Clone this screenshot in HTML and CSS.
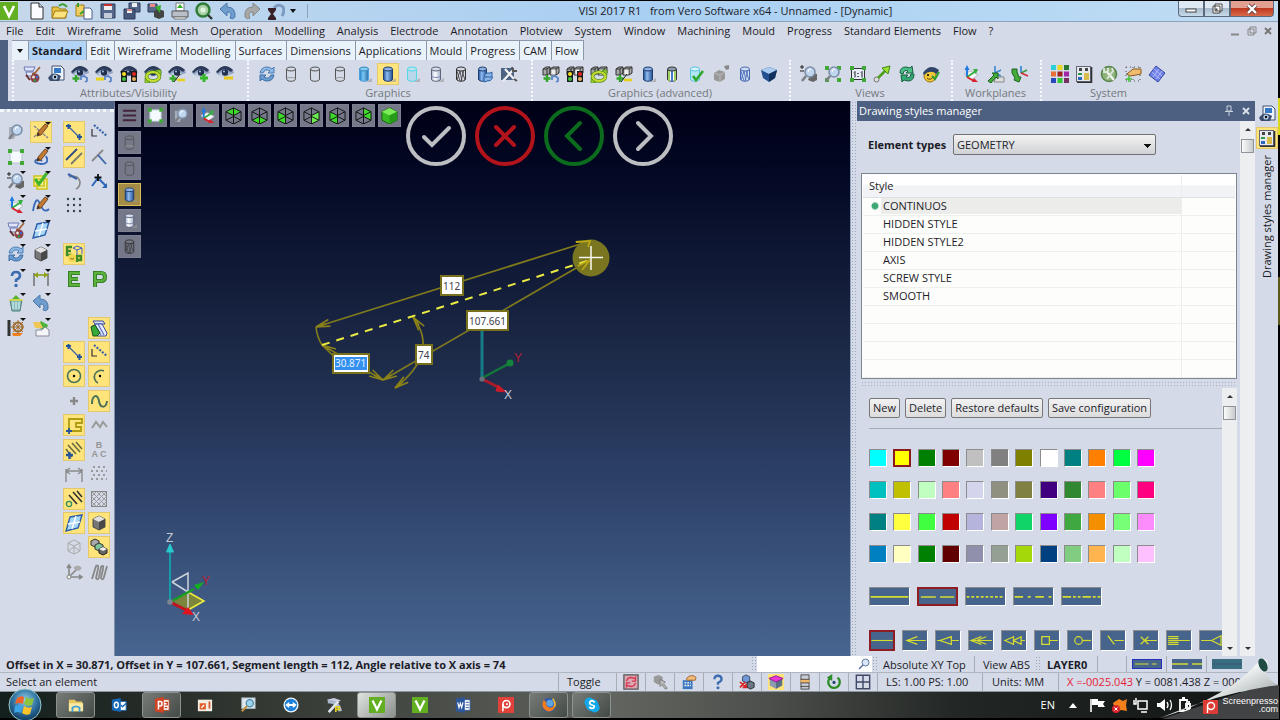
FILE: index.html
```html
<!DOCTYPE html>
<html lang="en">
<head>
<meta charset="utf-8">
<title>VISI 2017 R1 from Vero Software x64 - Unnamed - [Dynamic]</title>
<link rel="stylesheet" href="styles.css">
</head>
<body>
<svg class="defs" aria-hidden="true">
<defs>
<linearGradient id="gBlue"><stop offset="0" stop-color="#1f4f96"/><stop offset=".4" stop-color="#8fbdf0"/><stop offset="1" stop-color="#244f92"/></linearGradient>
<linearGradient id="gSky"><stop offset="0" stop-color="#1b78c4"/><stop offset=".4" stop-color="#7cc8f4"/><stop offset="1" stop-color="#2a6ea8"/></linearGradient>
<linearGradient id="gPale"><stop offset="0" stop-color="#a9b6d2"/><stop offset=".4" stop-color="#fff"/><stop offset="1" stop-color="#a3b0ce"/></linearGradient>
<linearGradient id="gCurl" x1="0" y1="0" x2="1" y2="1"><stop offset="0" stop-color="#6e7478"/><stop offset=".45" stop-color="#f4f6f6"/><stop offset=".7" stop-color="#b9bfc0"/><stop offset="1" stop-color="#777"/></linearGradient>
<radialGradient id="gOrb" cx=".5" cy=".35" r=".65"><stop offset="0" stop-color="#8fd0ea"/><stop offset=".6" stop-color="#2d6f9e"/><stop offset="1" stop-color="#10395c"/></radialGradient>
<g id="eye"><path d="M0 7Q8-3 17 5l1 3-3 1Q11 12 5 11L1 9z" fill="#8fa2c2"/><path d="M0 7Q8-4 17 5L15 7Q8 1 2 8Z" fill="#2b3a58"/><path d="M3 9Q8 4 14 8 10 12 5 11z" fill="#c3d2e8"/><circle cx="9" cy="7.500" r="3.200" fill="#22304e"/><circle cx="8" cy="6.500" r="1" fill="#9fc0ec"/></g>
<g id="plus"><path d="M5 10v7M1.500 13.500h7" stroke="#35a82c" stroke-width="2.400"/></g>
<g id="minus"><path d="M9 15h8" stroke="#e6d21b" stroke-width="2.600"/></g>
<g id="hook"><path d="M10 15v-3l3-1 3 2v3l-2 1" fill="none" stroke="#5a86c8" stroke-width="1.800"/></g>
<g id="lights"><rect x="1" y="6" width="6" height="11" fill="#1c1c1c"/><rect x="11" y="6" width="6" height="11" fill="#1c1c1c"/><circle cx="4" cy="9" r="2" fill="#f3e02c"/><circle cx="4" cy="14" r="2" fill="#3ec43e"/><circle cx="14" cy="9" r="2" fill="#e02424"/><circle cx="14" cy="14" r="2" fill="#e8b060"/></g>
<g id="cycleG"><ellipse cx="9" cy="11.500" rx="6.500" ry="4.500" fill="none" stroke="#4b8c1c" stroke-width="3.600"/><ellipse cx="9" cy="11.500" rx="6.500" ry="4.500" fill="none" stroke="#c8dc30" stroke-width="2.200"/><path d="M12 5h5v5zM6 18H1v-5z" fill="#98c828" stroke="#4b8c1c" stroke-width=".7"/></g>
<g id="boxes"><path d="M1 4l3-2h4v6l-3 2H1zM8 4l3-2h6v6l-3 2H8z" fill="#a9a9a9" stroke="#333"/><path d="M1 4h4v6M5 4l3-2M8 4h6v6M14 4l3-2" fill="none" stroke="#333"/><path d="M9.500 4.500h4v5h-4z" fill="#eee"/></g>
<g id="lens"><circle cx="10" cy="7" r="5" fill="#bfd6ee" stroke="#7d8ea8" stroke-width="1.600"/><path d="M6 11l-4 5" stroke="#7d8288" stroke-width="2.600"/><path d="M8 7q0-3 3-3" fill="none" stroke="#fff"/></g>
<g id="corners" fill="#41a838"><rect x="1" y="1" width="4" height="4"/><rect x="13" y="1" width="4" height="4"/><rect x="1" y="13" width="4" height="4"/><rect x="13" y="13" width="4" height="4"/></g>
<g id="cube"><path d="M3 5l6-3 6 3v8l-6 3-6-3z" fill="#777" stroke="#333" stroke-width=".8"/><path d="M3 5l6-3 6 3-6 3z" fill="#e2e2e2"/><path d="M9 8v8l6-3V5z" fill="#484848"/></g>
<g id="wire" fill="none" stroke="#111"><path d="M1 5l8-4 8 4v9l-8 4-8-4zM1 5l8 4 8-4M9 9v9M9 1v9M1 14l8-4 8 4"/></g>
<g id="pencil"><path d="M5 13l1-4 7-8 3 2-7 9z" fill="#c07a34" stroke="#5b3413" stroke-width=".8"/><path d="M5 13l1-3 2 1z" fill="#222"/></g>
<g id="axes"><path d="M2 9l7-3 7 4-7 5z" fill="#f6f8fc" stroke="#b9bfcc"/><path d="M5 12V3" stroke="#1f7be0" stroke-width="2"/><path d="M2.500 5L5 0l2.500 5z" fill="#1f7be0"/><path d="M5 12l9-6" stroke="#35b040" stroke-width="2"/><path d="M11 4h5l-2 5z" fill="#35b040"/><path d="M5 12l7 4" stroke="#d8232f" stroke-width="2"/><path d="M10 17l2-4 4 4z" fill="#d8232f"/></g>
<symbol id="i-eye" viewBox="0 0 18 18"><use href="#eye"/></symbol>
<symbol id="i-eyeh" viewBox="0 0 18 18"><use href="#eye"/><use href="#plus"/><use href="#hook"/></symbol>
<symbol id="i-eyem" viewBox="0 0 18 18"><use href="#eye"/><path d="M1 14h8" stroke="#e6d21b" stroke-width="3"/><use href="#hook"/></symbol>
<symbol id="i-eyet" viewBox="0 0 18 18"><use href="#eye"/><use href="#lights"/></symbol>
<symbol id="i-eyer" viewBox="0 0 18 18"><use href="#eye"/><use href="#cycleG"/></symbol>
<symbol id="i-eyepm" viewBox="0 0 18 18"><use href="#eye"/><use href="#plus"/><path d="M6 17l6-8" stroke="#222"/><use href="#minus"/></symbol>
<symbol id="i-eyep" viewBox="0 0 18 18"><use href="#eye"/><path d="M12 9v8M8 13h8" stroke="#35b82c" stroke-width="3"/></symbol>
<symbol id="i-eyen" viewBox="0 0 18 18"><use href="#eye"/><path d="M8 13h9" stroke="#e6c81b" stroke-width="3"/></symbol>
<symbol id="i-brush" viewBox="0 0 18 18"><path d="M1 2h11l-2 4H2zM3 7h8l-1 4H4z" fill="#dfe4fa" stroke="#6c7ab4"/><path d="M17 2l-5 6-3 1" fill="none" stroke="#a06030" stroke-width="1.600"/><circle cx="12" cy="13" r="4.500" fill="#8c4048"/><circle cx="10.500" cy="12" r="1.500" fill="#e8e0d0"/><circle cx="14" cy="12" r="1.300" fill="#3868c8"/><circle cx="12" cy="15.500" r="1.300" fill="#2f9a48"/><path d="M3 10l4 5" stroke="#6a2c2c" stroke-width="2"/></symbol>
<symbol id="i-eyedoc" viewBox="0 0 18 18"><path d="M5 1h9l3 3v11H5z" fill="#eef3fb" stroke="#40506c"/><path d="M7 3h7v5H7z" fill="#3478c8"/><path d="M1 13q5-8 13-2l-2 5H3z" fill="#3b4c6c"/><circle cx="8" cy="12" r="2.600" fill="#b9d3ee"/><circle cx="8" cy="12" r="1.200"/></symbol>
<symbol id="i-cycle" viewBox="0 0 18 18"><path d="M2 8q1-6 7-6 3 0 5 2l2-2v6h-6l2-2q-5-3-7 2z" fill="#8fb8e2" stroke="#4c7fb8"/><path d="M16 10q-1 6-7 6-3 0-5-2l-2 2v-6h6l-2 2q5 3 7-2z" fill="#6a9cd2" stroke="#3c6ea8"/></symbol>
<symbol id="i-cyl" viewBox="0 0 18 18"><path d="M4.500 4v10c0 3 9 3 9 0V4" fill="none" stroke="#555"/><ellipse cx="9" cy="4" rx="4.500" ry="2" fill="none" stroke="#555"/><path d="M4.500 14c0-2 9-2 9 0" fill="none" stroke="#999"/></symbol>
<symbol id="i-cyl2" viewBox="0 0 18 18"><path d="M4.500 4v10c0 3 9 3 9 0V4" fill="none" stroke="#555"/><ellipse cx="9" cy="4" rx="4.500" ry="2" fill="none" stroke="#555"/></symbol>
<symbol id="i-cylb" viewBox="0 0 18 18"><path d="M11 17h6v-4z" fill="#999" opacity=".6"/><path d="M4.500 4v10c0 3 9 3 9 0V4" fill="url(#gBlue)" stroke="#1d3c70"/><ellipse cx="9" cy="4" rx="4.500" ry="2" fill="#8db2e2" stroke="#1d3c70"/></symbol>
<symbol id="i-cyls" viewBox="0 0 18 18"><path d="M11 17h6v-4z" fill="#999" opacity=".6"/><path d="M4.500 4v10c0 3 9 3 9 0V4" fill="url(#gSky)" stroke="#4aa0d8"/><ellipse cx="9" cy="4" rx="4.500" ry="2" fill="#7fcbee" stroke="#3a88c0"/></symbol>
<symbol id="i-cylc" viewBox="0 0 18 18"><path d="M11 17h6v-4z" fill="#999" opacity=".6"/><path d="M4.500 4v10c0 3 9 3 9 0V4" fill="#b9d6ea" stroke="#52d8e6"/><ellipse cx="9" cy="4" rx="4.500" ry="2" fill="#b9e6ee" stroke="#52d8e6"/></symbol>
<symbol id="i-cylp" viewBox="0 0 18 18"><path d="M11 17h6v-4z" fill="#999" opacity=".6"/><path d="M4.500 4v10c0 3 9 3 9 0V4" fill="url(#gPale)" stroke="#5a6478"/><ellipse cx="9" cy="4" rx="4.500" ry="2" fill="#d4dcea" stroke="#5a6478"/><path d="M4.500 11c2 2 7 2 9 0" fill="none" stroke="#7a86a8"/></symbol>
<symbol id="i-cylw" viewBox="0 0 18 18"><path d="M4.500 4v10c0 3 9 3 9 0V4" fill="none" stroke="#333"/><ellipse cx="9" cy="4" rx="4.500" ry="2" fill="none" stroke="#333"/><path d="M5 6l3 10M8 6l-3 9M8 6l2 10M12 5l-3 11M10 6l3 9" stroke="#444" stroke-width=".9"/></symbol>
<symbol id="i-cylbw" viewBox="0 0 18 18"><path d="M4.500 4v10c0 3 9 3 9 0V4" fill="#cfdcf4" stroke="#4a6cb4"/><ellipse cx="9" cy="4" rx="4.500" ry="2" fill="none" stroke="#4a6cb4"/><path d="M5 6l3 10M8 6l-3 9M8 6l2 10M12 5l-3 11M10 6l3 9" stroke="#4a6cb4" stroke-width=".9"/></symbol>
<symbol id="i-cylcy" viewBox="0 0 18 18"><path d="M2.500 4v10c0 3 8 3 8 0V4" fill="url(#gBlue)" stroke="#1d3c70"/><ellipse cx="6.500" cy="4" rx="4" ry="2" fill="#8db2e2" stroke="#1d3c70"/><path d="M8 11q2-4 6-3l2-1v5h-4M17 12q-2 5-6 4l-3 1v-5h4" fill="#8ab4e4" stroke="#2c62a8"/></symbol>
<symbol id="i-tools" viewBox="0 0 18 18"><rect x="1" y="3" width="13" height="12" fill="#4c6482"/><path d="M3 16L13 5M5 4l9 10" stroke="#f2f2f2" stroke-width="2.200"/><path d="M12 2l1 4 4 0" fill="none" stroke="#555" stroke-width="2"/><path d="M14 14l3 2" stroke="#555" stroke-width="2"/></symbol>
<symbol id="i-bxh" viewBox="0 0 18 18"><use href="#boxes"/><use href="#plus"/><use href="#hook"/></symbol>
<symbol id="i-bxt" viewBox="0 0 18 18"><use href="#boxes"/><use href="#lights"/></symbol>
<symbol id="i-bxr" viewBox="0 0 18 18"><use href="#boxes"/><use href="#cycleG"/></symbol>
<symbol id="i-bxp" viewBox="0 0 18 18"><use href="#boxes"/><use href="#plus"/><path d="M6 17l6-8" stroke="#222"/><use href="#minus"/></symbol>
<symbol id="i-cylstr" viewBox="0 0 18 18"><path d="M4.500 4v10c0 3 9 3 9 0V4" fill="#fff" stroke="#333"/><path d="M6 5v11M12 5v11" stroke="#8ec63f" stroke-width="1.600"/><path d="M9 5v12" stroke="#4a78c8" stroke-width="2"/><ellipse cx="9" cy="4" rx="4.500" ry="2" fill="#8d9db2" stroke="#333"/></symbol>
<symbol id="i-cylok" viewBox="0 0 18 18"><path d="M3.500 4v10c0 3 9 3 9 0V4" fill="#aee6f4" stroke="#5cc4dc"/><ellipse cx="8" cy="4" rx="4.500" ry="2" fill="#d6f6fc" stroke="#5cc4dc"/><path d="M6 11l3 4 7-9" fill="none" stroke="#2fa82c" stroke-width="2.600"/></symbol>
<symbol id="i-grey" viewBox="0 0 18 18"><path d="M2 8l5-3 6 2v7l-5 3-6-2z" fill="#999"/><path d="M2 8l6 2 5-3M8 10v7" stroke="#bbb" fill="none"/><path d="M12 1l5-1v4l-3 1z" fill="#888"/></symbol>
<symbol id="i-gem" viewBox="0 0 18 18"><path d="M1 5l8-3 8 3-2 8-6 4-6-4z" fill="#23508f"/><path d="M1 5l8-3 8 3-8 4z" fill="#a9cbf0"/><path d="M9 9v8l6-4 2-8z" fill="#12305e"/></symbol>
<symbol id="i-zoompm" viewBox="0 0 18 18"><path d="M11 8l6 1v6l-4 2-5-2z" fill="#666"/><use href="#lens"/><path d="M0 2h4M2 0v4M0 6h4" stroke="#222"/></symbol>
<symbol id="i-zoomc" viewBox="0 0 18 18"><use href="#corners"/><use href="#lens"/></symbol>
<symbol id="i-one" viewBox="0 0 18 18"><rect x="2.500" y="3.500" width="13" height="11" fill="#e6ecf8" stroke="#333"/><use href="#corners"/><path d="M5 7.500l1-1v6M12 7.500l1-1v6" fill="none" stroke="#222"/><path d="M9 8v1M9 11v1" stroke="#222" stroke-width="1.400"/></symbol>
<symbol id="i-varrow" viewBox="0 0 18 18"><circle cx="3.500" cy="14.500" r="2.500" fill="#ddd" stroke="#777"/><path d="M5 13l8-8" stroke="#4f9e20" stroke-width="2.600"/><path d="M9 3l8-2-2 8z" fill="#9fe030" stroke="#3c8a18"/></symbol>
<symbol id="i-rot" viewBox="0 0 18 18"><path d="M2 8q0-6 6-6l4 1 2-2 1 7-7 0 2-2q-4-2-5 3z" fill="#4cc088" stroke="#14603c"/><path d="M16 9q0 7-6 7l-4-1-2 2-1-7h7l-2 2q4 2 5-3z" fill="#35a878" stroke="#14603c"/></symbol>
<symbol id="i-smile" viewBox="0 0 18 18"><circle cx="8" cy="11" r="6" fill="#f2c838" stroke="#9a7212"/><path d="M1 8Q8-2 17 5l-2 4Q8 4 2 10z" fill="#2e4468"/><circle cx="6" cy="10" r="1"/><path d="M5 13q3 3 6-1" fill="none" stroke="#5a3c08"/><path d="M10 11l3 3 4-7" fill="none" stroke="#2f9c2c" stroke-width="2"/></symbol>
<symbol id="i-axes" viewBox="0 0 18 18"><use href="#axes"/></symbol>
<symbol id="i-axes2" viewBox="0 0 18 18"><path d="M8 8V1M8 8l6-3M8 8l6 3" stroke="#3a8ad0" stroke-width="1.600"/><path d="M9 12h8v5H7z" fill="#ddd" stroke="#888"/><path d="M1 16l6-6-2-2h6v6l-2-2-5 6z" fill="#45ac3c" stroke="#1d6420"/></symbol>
<symbol id="i-axes3" viewBox="0 0 18 18"><path d="M10 8V1" stroke="#2c80dc" stroke-width="1.600"/><path d="M10 8l6-3" stroke="#35a040" stroke-width="1.600"/><path d="M10 8l7 3" stroke="#d02c38" stroke-width="1.600"/><path d="M1 4h5v3l2 5h2l-2 5-5-2 1-2-3-5z" fill="#45ac3c" stroke="#1d6420"/></symbol>
<symbol id="i-pal" viewBox="0 0 18 18"><path d="M0 0h5v5H0z" fill="#2cd0d8"/><path d="M6.500 0h5v5h-5z" fill="#e8d820"/><path d="M13 0h5v5h-5z" fill="#287830"/><path d="M0 6.500h5v5H0z" fill="#e87038"/><path d="M6.500 6.500h5v5h-5z" fill="#a02020"/><path d="M13 6.500h5v5h-5z" fill="#a028a8"/><path d="M0 13h5v5H0z" fill="#2848c0"/><path d="M6.500 13h5v5h-5z" fill="#30c830"/><path d="M13 13h5v5h-5z" fill="#783060"/></symbol>
<symbol id="i-sheet" viewBox="0 0 18 18"><rect x="1.500" y="1.500" width="14" height="15" fill="#e6eaf0" stroke="#667"/><path d="M16.500 2v15.500H2" fill="none" stroke="#333" stroke-width="1.600"/><path d="M4 3h3v3H4zM10 3h3v3h-3z" fill="#444"/><path d="M3 8h4v2H3z" fill="#2f9a48"/><path d="M3 12h4v3H3z" fill="#2c68c0"/><path d="M9 8h5v7H9z" fill="#d8bc4c"/></symbol>
<symbol id="i-gear" viewBox="0 0 18 18"><circle cx="9" cy="9" r="7.500" fill="#8eb47c" stroke="#5a8450" stroke-width="1.600"/><path d="M7 7l7 8" stroke="#f2f4f0" stroke-width="2.400"/><path d="M4 3v4h4V3M12 3l1 3-6 8" fill="none" stroke="#dfe6dc" stroke-width="1.800"/></symbol>
<symbol id="i-hand" viewBox="0 0 18 18"><path d="M2 2h14M2 16h14M2 9h14M2 2v14M9 2v14M16 2v14" stroke="#555" stroke-dasharray="1 3"/><path d="M17 4H9L3 9l3 2 6-1 5-1z" fill="#f0bc70" stroke="#8a5a1c"/><path d="M5 11v6M2 14h6" stroke="#46c43c" stroke-width="1.600"/></symbol>
<symbol id="i-dia" viewBox="0 0 18 18"><path d="M8 1l9 7-7 9-9-7z" fill="#6f80e8" stroke="#3448a0"/><path d="M6 4l8 7M4 7l8 7M11 4l-6 8M14 6l-6 8" stroke="#b4bcff"/></symbol>
<symbol id="i-lens" viewBox="0 0 18 18"><path d="M2 4h5l3 6-3 6H2z" fill="#a8aeb8"/><use href="#lens"/></symbol>
<symbol id="i-fit" viewBox="0 0 18 18"><rect x="3" y="3" width="12" height="12" fill="#f4faff" stroke="#b4c0d0"/><use href="#corners"/></symbol>
<symbol id="i-pc1" viewBox="0 0 18 18"><path d="M2 3l14 12M2 14L13 4" stroke="#8a8a94" stroke-dasharray="3 1" stroke-width="1.600"/><use href="#pencil"/></symbol>
<symbol id="i-pc2" viewBox="0 0 18 18"><path d="M14 8q4 8-5 8-8-1-5-4 4-1 6 1" fill="none" stroke="#3868b8" stroke-width="1.800"/><use href="#pencil"/></symbol>
<symbol id="i-pc3" viewBox="0 0 18 18"><path d="M1 15Q4-2 8 8t9 5" fill="none" stroke="#3868b8" stroke-width="1.800"/><use href="#pencil"/></symbol>
<symbol id="i-chk" viewBox="0 0 18 18"><path d="M5 7h10v10H5zM2 4h10v10H2z" fill="#f2f294" stroke="#d0c41c" stroke-width="1.600"/><path d="M3 7l4 5 8-11" fill="none" stroke="#3fb42c" stroke-width="3"/></symbol>
<symbol id="i-win" viewBox="0 0 18 18"><path d="M5 3l12-2-4 13-12 3z" fill="#a8d8f8" stroke="#2c5ca8" stroke-width="1.400"/><path d="M11 2L7 15M3 10l12-2" stroke="#fff" stroke-width="1.400"/></symbol>
<symbol id="i-cube" viewBox="0 0 18 18"><use href="#cube"/></symbol>
<symbol id="i-q" viewBox="0 0 18 18"><path d="M5 6q0-4 4-4t4 4q0 2-4 4v2" fill="none" stroke="#3c6cb0" stroke-width="2.600"/><circle cx="9" cy="15.500" r="1.700" fill="#3c6cb0"/></symbol>
<symbol id="i-dim" viewBox="0 0 18 18"><path d="M2 3v13M16 3v13" stroke="#777" stroke-width="1.600"/><path d="M2 5h14" stroke="#8fa018" stroke-width="1.600"/><path d="M2 5l4-3v6zM16 5l-4-3v6z" fill="#8fa018"/></symbol>
<symbol id="i-bin" viewBox="0 0 18 18"><path d="M3 6h12l-2 11H5z" fill="#8cb8b8" stroke="#4c7c84"/><path d="M6 8v7M9 8v7M12 8v7" stroke="#dff" /><path d="M5 5l4-4 4 4z" fill="#58b42c"/><path d="M2 6h14" stroke="#e0e048" stroke-width="1.600"/></symbol>
<symbol id="i-undo" viewBox="0 0 18 18"><path d="M1 7l7-6v4q9 0 8 10-2 3-5 1 3-6-3-6v4z" fill="#6f9dcc" stroke="#4b78ac"/></symbol>
<symbol id="i-redo" viewBox="0 0 18 18"><path d="M17 7l-7-6v4Q1 5 2 15q2 3 5 1-3-6 3-6v4z" fill="#a8a8a8" stroke="#888"/></symbol>
<symbol id="i-wheel" viewBox="0 0 18 18"><path d="M2 1v16" stroke="#333" stroke-width="3"/><path d="M5 14h11l-3 3H6z" fill="#f08020"/><circle cx="11" cy="8" r="4.500" fill="none" stroke="#a06c30" stroke-width="2"/><path d="M11 1v14M4 8h13M6 3l10 10M16 3L6 13" stroke="#a06c30"/></symbol>
<symbol id="i-house" viewBox="0 0 18 18"><path d="M3 8l6-6 7 4-2 5z" fill="#4cb43c"/><path d="M1 3h7l3 6H3z" fill="#f0c858"/><path d="M4 11h6l3-3 4 3v6H4z" fill="#f4f6fa" stroke="#8a8a98"/></symbol>
<symbol id="i-seg" viewBox="0 0 18 18"><path d="M4 4l10 10" stroke="#3a62a8" stroke-width="1.200"/><path d="M1 3h5M3.500 1v5M12 14h5M14.500 11v6" stroke="#24549c" stroke-width="2"/></symbol>
<symbol id="i-lseg" viewBox="0 0 18 18"><path d="M2 6v7h5" fill="none" stroke="#333" stroke-width="1.200"/><path d="M4 2l13 11" stroke="#3a62a8" stroke-width="2.200" stroke-dasharray="2 1.500"/></symbol>
<symbol id="i-par" viewBox="0 0 18 18"><path d="M1 12L12 1" stroke="#2c4c88" stroke-width="1.800"/><path d="M6 16L17 5" stroke="#77786c" stroke-width="1.800"/></symbol>
<symbol id="i-perp" viewBox="0 0 18 18"><path d="M2 13L13 2" stroke="#888" stroke-width="1.800"/><path d="M8 7l8 9" stroke="#3a62a8" stroke-width="1.800"/></symbol>
<symbol id="i-tan" viewBox="0 0 18 18"><path d="M4 5q9-3 11 5 0 5-4 7" fill="none" stroke="#888" stroke-width="1.600"/><path d="M3 2l9 5" stroke="#3a62a8" stroke-width="2.200"/></symbol>
<symbol id="i-ang" viewBox="0 0 18 18"><path d="M2 14l6-8 8 8" fill="none" stroke="#2c66b8" stroke-width="2"/><path d="M8 2v7M4.500 5.500h7" stroke="#111" stroke-width="1.800"/><path d="M12 16h5v-5z" fill="#2c66b8"/></symbol>
<symbol id="i-dots" viewBox="0 0 18 18"><g fill="#345"><circle cx="3" cy="3" r="1.200"/><circle cx="9" cy="3" r="1.200"/><circle cx="15" cy="3" r="1.200"/><circle cx="3" cy="9" r="1.200"/><circle cx="9" cy="9" r="1.200"/><circle cx="15" cy="9" r="1.200"/><circle cx="3" cy="15" r="1.200"/><circle cx="9" cy="15" r="1.200"/><circle cx="15" cy="15" r="1.200"/></g></symbol>
<symbol id="i-e" viewBox="0 0 18 18"><path d="M15 3H5v12h10M5 9h8" fill="none" stroke="#2c7420" stroke-width="4"/><path d="M15 3H5v12h10M5 9h8" fill="none" stroke="#5cb03c" stroke-width="2.400"/></symbol>
<symbol id="i-p" viewBox="0 0 18 18"><path d="M5 17V3h6q4 0 4 4t-4 4H6" fill="none" stroke="#2c7420" stroke-width="4"/><path d="M5 17V3h6q4 0 4 4t-4 4H6" fill="none" stroke="#5cb03c" stroke-width="2.400"/></symbol>
<symbol id="i-ep" viewBox="0 0 18 18"><path d="M7 2H2v8h5M2 6h4M12 17v-6h4v4h-4" fill="none" stroke="#3c8c28" stroke-width="2.400"/><path d="M8 3l4-2 5 2v6M12 5v5M8 3l4 2 5-2" fill="none" stroke="#3a62c8"/><circle cx="7" cy="13" r="4" fill="#f2d84c"/><path d="M5 13q2 3 4 0" fill="none" stroke="#863"/></symbol>
<symbol id="i-books" viewBox="0 0 18 18"><path d="M3 2h10l2 3H5z" fill="#dfe6ff" stroke="#35489a"/><path d="M1 8l5-3h6l5 9-1 3H7z" fill="#e8eeff" stroke="#35489a"/><path d="M5 6l6 10M8 5l6 11" stroke="#6878c8" stroke-width="1.400"/><path d="M1 8l4-2 5 8-3 3H3z" fill="#38a838" stroke="#17561a"/></symbol>
<symbol id="i-circ" viewBox="0 0 18 18"><circle cx="9" cy="9" r="6.500" fill="none" stroke="#4a7258" stroke-width="1.600"/><circle cx="9" cy="9" r="1.200"/></symbol>
<symbol id="i-arc" viewBox="0 0 18 18"><path d="M14 4a6.500 6.500 0 1 0-6 12" fill="none" stroke="#4a7258" stroke-width="1.600"/><circle cx="10" cy="9" r="1.200"/></symbol>
<symbol id="i-pt" viewBox="0 0 18 18"><path d="M9 5v8M5 9h8" stroke="#888" stroke-width="2.400"/></symbol>
<symbol id="i-wave" viewBox="0 0 18 18"><path d="M2 12C2 2 8 2 9 9s7 8 8 0" fill="none" stroke="#4a7258" stroke-width="2"/></symbol>
<symbol id="i-prof" viewBox="0 0 18 18"><path d="M4 15V3h13v4h-6v4h5v4z" fill="none" stroke="#b09c10" stroke-width="1.800"/><path d="M1 15h6M4 12v6" stroke="#24549c" stroke-width="1.800"/></symbol>
<symbol id="i-zig" viewBox="0 0 18 18"><path d="M2 12l4-6 4 5 3-5 4 5" fill="none" stroke="#999" stroke-width="2"/></symbol>
<symbol id="i-hat" viewBox="0 0 18 18"><path d="M3 4l8 9M7 2l8 9M11 1l6 7M1 8l6 8" stroke="#6b6b40" stroke-width="1.600"/><path d="M1 14h7M4.500 11v7" stroke="#24549c" stroke-width="2.400"/></symbol>
<symbol id="i-hat2" viewBox="0 0 18 18"><path d="M4 5l8 9M8 2l9 10M12 1l5 6" stroke="#333" stroke-width="1.600"/><circle cx="4" cy="14" r="2.600" fill="#ffe478" stroke="#359060" stroke-width="1.400"/></symbol>
<symbol id="i-gdim" viewBox="0 0 18 18"><path d="M1 4v13M17 4v13M1 6h16M1 6l4-3M1 6l4 3M17 6l-4-3M17 6l-4 3" fill="none" stroke="#8c8c8c" stroke-width="1.400"/></symbol>
<symbol id="i-gdots" viewBox="0 0 18 18"><path d="M3 2h14M1 6h16M3 10h14M1 14h16" stroke="#999" stroke-width="2" stroke-dasharray="2 3"/></symbol>
<symbol id="i-mesh" viewBox="0 0 18 18"><rect x="1.500" y="1.500" width="15" height="15" fill="none" stroke="#888"/><path d="M2 6l4-4M2 11l9-9M2 16L16 2M7 16l9-9M12 16l4-4M2 12l4 4M2 7l9 9M2 2l14 14M7 2l9 9M12 2l4 4" stroke="#999"/></symbol>
<symbol id="i-gcube" viewBox="0 0 18 18"><path d="M3 5l6-3 6 3v8l-6 3-6-3zM3 5l6 3 6-3M9 8v8M3 13l6-4 6 4" fill="none" stroke="#aaa"/></symbol>
<symbol id="i-cubes" viewBox="0 0 18 18"><path d="M1 3l4-2 4 2v4l-4 2-4-2z" fill="#aaa" stroke="#333"/><path d="M5 7l4-2 4 2v4l-4 2-4-2z" fill="#7cc49c" stroke="#333"/><path d="M9 11l4-2 4 2v4l-4 2-4-2z" fill="#666" stroke="#222"/><path d="M9 11l4-2 4 2-4 2z" fill="#eee"/></symbol>
<symbol id="i-gaxes" viewBox="0 0 18 18"><path d="M4 14V3M2 5l2-3 2 3M4 14h12M14 12l3 2-3 2M4 14l9-9" fill="none" stroke="#888" stroke-width="1.600"/><path d="M8 5q5-5 9 0l-3 3z" fill="#aaa"/><circle cx="4" cy="14" r="2" fill="#eee" stroke="#888"/></symbol>
<symbol id="i-coil" viewBox="0 0 18 18"><path d="M2 16L6 3q3-2 2 3L6 15q2 3 3-1l2-10q3-3 2 2l-2 9q2 3 3-1l3-11" fill="none" stroke="#888" stroke-width="1.800"/></symbol>
<symbol id="i-menu" viewBox="0 0 18 18"><path d="M2 4h14M2 9h14M2 14h14" stroke="#43243c" stroke-width="2"/></symbol>
<symbol id="i-w1" viewBox="0 0 18 18"><path d="M1 5l8-4 8 4-8 4z" fill="#3fd82c"/><use href="#wire"/></symbol>
<symbol id="i-w2" viewBox="0 0 18 18"><path d="M1 14l8-4 8 4-8 4z" fill="#3fd82c"/><use href="#wire"/></symbol>
<symbol id="i-w3" viewBox="0 0 18 18"><path d="M1 5l8 4v9l-8-4z" fill="#3fd82c"/><use href="#wire"/></symbol>
<symbol id="i-w4" viewBox="0 0 18 18"><path d="M9 9l8-4v9l-8 4z" fill="#6ce850"/><use href="#wire"/></symbol>
<symbol id="i-w5" viewBox="0 0 18 18"><path d="M9 1l8 4v9l-8-4z" fill="#3fd82c"/><use href="#wire"/></symbol>
<symbol id="i-w6" viewBox="0 0 18 18"><path d="M1 5l8-4 8 4v9l-8 4-8-4z" fill="#37bc24" stroke="#186010"/><path d="M1 5l8-4 8 4-8 4z" fill="#7cec58"/><path d="M9 9v9l8-4V5z" fill="#259a18"/></symbol>
<symbol id="i-new" viewBox="0 0 18 18"><path d="M4 1h8l4 4v12H4z" fill="#fbfcff" stroke="#333"/><path d="M12 1v4h4" fill="#ccd6e8" stroke="#333"/></symbol>
<symbol id="i-open" viewBox="0 0 18 18"><path d="M1 5h6l2 2h6v9H1z" fill="#e8c040" stroke="#a07c18"/><path d="M4 9h13l-3 7H1z" fill="#fbe27c" stroke="#a07c18"/><path d="M8 4q4-4 8 1" fill="none" stroke="#38a02c" stroke-width="2"/></symbol>
<symbol id="i-openc" viewBox="0 0 18 18"><path d="M1 3h8v11H1z" fill="#f0d060" stroke="#a07c18"/><path d="M9 6h6l2 2v9H9z" fill="#fff" stroke="#4a5c88"/><path d="M3 1v4M9 9l-4 3" stroke="#38a02c" stroke-width="2"/></symbol>
<symbol id="i-save" viewBox="0 0 18 18"><path d="M2 2h14v14H2z" fill="#56688c" stroke="#2c3a58"/><path d="M5 2h8v6H5z" fill="#eee"/><path d="M5 3h8" stroke="#c03030" stroke-width="2"/><path d="M5 11h8v5H5z" fill="#c4ccdc"/></symbol>
<symbol id="i-savea" viewBox="0 0 18 18"><path d="M6 1h11v9H6z" fill="#56688c" stroke="#2c3a58"/><path d="M9 1h5v4H9z" fill="#eee"/><path d="M1 7h11v10H1z" fill="#46587c" stroke="#2c3a58"/><path d="M4 7h5v4H4z" fill="#eee"/><path d="M4 8h5" stroke="#c03030"/></symbol>
<symbol id="i-savex" viewBox="0 0 18 18"><path d="M1 2h9v8H1z" fill="#56688c" stroke="#2c3a58"/><path d="M3 2h5v3H3z" fill="#e88"/><path d="M7 9l5-2 5 2v6l-5 2-5-2z" fill="#444"/><path d="M8 5l6-2-1 8z" fill="#38b02c"/></symbol>
<symbol id="i-print" viewBox="0 0 18 18"><path d="M5 1h8v8H5z" fill="#fff" stroke="#777"/><path d="M9 2l3 4H6z" fill="#38b02c"/><path d="M1 9h16v6H1z" fill="#b9bec8" stroke="#555"/><path d="M3 15h12v2H3z" fill="#fff" stroke="#777"/></symbol>
<symbol id="i-prev" viewBox="0 0 18 18"><circle cx="8" cy="8" r="6.500" fill="#a8d0a4" stroke="#2f7c38" stroke-width="2.400"/><circle cx="8" cy="8" r="2.600" fill="#dff4e0"/><path d="M13 13l4 4" stroke="#333" stroke-width="2.400"/></symbol>
<symbol id="i-hour" viewBox="0 0 18 18"><path d="M7 6q4-5 9-1 2 4-1 9" fill="none" stroke="#7c9cc4" stroke-width="3"/><path d="M1 6h8v2L6 12l3 4v2H1v-2l3-4-3-4z" fill="#382028"/></symbol>
<symbol id="i-v" viewBox="0 0 18 18"><rect width="18" height="18" fill="#62b022"/><path d="M4 4l5 10 5-10" fill="none" stroke="#fff" stroke-width="2.600"/></symbol>
<symbol id="i-fold" viewBox="0 0 18 18"><path d="M1 3h7l1 2h7v11H1z" fill="#e8c860"/><path d="M1 7h16v9H1z" fill="#fbeaa4"/><path d="M5 17v-5q4-3 8 0v5" fill="none" stroke="#3c9cd8" stroke-width="2"/></symbol>
<symbol id="i-outl" viewBox="0 0 18 18"><path d="M8 5h9v10H8z" fill="#fff" stroke="#1568b8"/><path d="M11 9l2 2 4-4" fill="none" stroke="#1568b8" stroke-width="1.400"/><path d="M1 3l10-2v16L1 15z" fill="#1568b8"/><ellipse cx="6" cy="9" rx="2.200" ry="3" fill="none" stroke="#fff" stroke-width="1.600"/></symbol>
<symbol id="i-ppt" viewBox="0 0 18 18"><path d="M8 3h9v12H8z" fill="#fff" stroke="#c43e1c"/><path d="M12 6h3v3h-3M12 12h3" stroke="#c43e1c" fill="none" stroke-width="1.400"/><path d="M1 2l10-2v18L1 16z" fill="#d04423"/><path d="M5 14V5h2q2 0 2 2.500T7 10H5" fill="none" stroke="#fff" stroke-width="1.700"/></symbol>
<symbol id="i-rep" viewBox="0 0 18 18"><rect x="1" y="3" width="16" height="13" fill="#f4eee4"/><rect x="3" y="7" width="7" height="7" fill="#e0602c"/><path d="M5 12l3-3M14 5v8" stroke="#fff" stroke-width="1.500"/><path d="M14 5v8" stroke="#d0582c" stroke-width="2"/></symbol>
<symbol id="i-find" viewBox="0 0 18 18"><rect x="2" y="1" width="15" height="12" fill="#dfe9ee" stroke="#a4b4bc"/><circle cx="11" cy="7" r="4" fill="#9cd4ec" stroke="#4c88a8" stroke-width="1.400"/><path d="M8 10l-6 6" stroke="#c09048" stroke-width="2.400"/></symbol>
<symbol id="i-tv" viewBox="0 0 18 18"><circle cx="9" cy="9" r="8.500" fill="#f2f8fc"/><circle cx="9" cy="9" r="7" fill="#1d7fd8"/><path d="M2.500 9L7 5.500V8h4V5.500L15.500 9 11 12.500V10H7v2.500z" fill="#fff"/></symbol>
<symbol id="i-scr" viewBox="0 0 18 18"><path d="M1 3l8-2 8 3-9 4z" fill="#ccd"/><path d="M2 5q12 0 14 11" fill="none" stroke="#a8b8cc" stroke-width="4"/><path d="M3 17L14 5" stroke="#dde4ec" stroke-width="3"/><path d="M11 17v-6h4v3h-4" fill="none" stroke="#e6d21b" stroke-width="1.800"/></symbol>
<symbol id="i-word" viewBox="0 0 18 18"><path d="M8 3h9v12H8z" fill="#fff" stroke="#2b579a"/><path d="M12 6h4M12 9h4M12 12h4" stroke="#2b579a"/><path d="M1 2l10-2v18L1 16z" fill="#2b579a"/><path d="M3 6l1.500 6L6 7l1.500 5L9 6" fill="none" stroke="#fff" stroke-width="1.300"/></symbol>
<symbol id="i-sp" viewBox="0 0 18 18"><rect width="18" height="18" fill="#e2413a"/><circle cx="9.500" cy="8" r="4" fill="none" stroke="#fff" stroke-width="1.800"/><path d="M5.500 8v8M9 8h2" stroke="#fff" stroke-width="1.800"/></symbol>
<symbol id="i-ff" viewBox="0 0 18 18"><circle cx="9" cy="9" r="8" fill="#2c58b0"/><circle cx="10" cy="7" r="4" fill="#5ca4e0"/><path d="M3 3q-3 6 0 10 5 6 11 1 4-4 2-9-1 7-6 7-5-1-4-5 0-2-3-4z" fill="#f07c1c"/><path d="M13 2q4 4 2 9" fill="none" stroke="#f8c030" stroke-width="1.600"/></symbol>
<symbol id="i-sky" viewBox="0 0 18 18"><circle cx="6" cy="6" r="5.500" fill="#13a8ea"/><circle cx="12" cy="12" r="5.500" fill="#13a8ea"/><circle cx="9" cy="9" r="7" fill="#13a8ea"/><path d="M12 6q-3-3-5-1-2 3 2 4 4 1 2 3-2 2-5-1" fill="none" stroke="#fff" stroke-width="2"/></symbol>
<symbol id="i-redc" viewBox="0 0 18 18"><rect x="1" y="1" width="16" height="16" fill="#d8a8b4" stroke="#555" stroke-width="1.400"/><path d="M4 8q1-4 5-4l4 1 1-1v4h-4M14 10q-1 4-5 4l-4-1-1 1v-4h4" fill="none" stroke="#d83850" stroke-width="1.600"/></symbol>
<symbol id="i-sel" viewBox="0 0 18 18"><path d="M2 3l5-2 5 2v6l-5 3-5-3z" fill="#999"/><path d="M9 6l6 3-2 2 4 5-2 1-4-5-2 2z" fill="#bbb" stroke="#777"/></symbol>
<symbol id="i-prop" viewBox="0 0 18 18"><path d="M2 7h11v10H2z" fill="#3c78c0"/><path d="M4 10h7M4 13h7" stroke="#fff" stroke-dasharray="2 1" stroke-width="1.600"/><path d="M6 5q6-6 11-1l-1 3H7z" fill="#f0bc80" stroke="#a05c1c"/></symbol>
<symbol id="i-move" viewBox="0 0 18 18"><path d="M4 3l4-2 4 2v5l-4 2-4-2z" fill="#7098d8" stroke="#345"/><path d="M9 10l4-2 4 2v5l-4 2-4-2z" fill="#6a7888" stroke="#222"/><path d="M1 9l6 5M7 9l-6 6M8 11v4H4" fill="none" stroke="#d82020" stroke-width="1.800"/></symbol>
<symbol id="i-mag" viewBox="0 0 18 18"><path d="M2 5v8l7 4V8z" fill="#8c9cb0"/><path d="M16 5v8l-7 4V8z" fill="#5a7088"/><path d="M1 5l8-3 8 3-8 4z" fill="#e838d8" stroke="#8c1888"/></symbol>
<symbol id="i-lay" viewBox="0 0 18 18"><rect x="4.500" y="1" width="9" height="16" fill="#c8ccd4" stroke="#444"/><path d="M4 6h10v4H4z" fill="#f0b868"/><path d="M4 6h10M4 10h10M4 14h10" stroke="#444"/></symbol>
<symbol id="i-turn" viewBox="0 0 18 18"><path d="M13 4a6.500 6.500 0 1 1-9 1" fill="none" stroke="#2c8c28" stroke-width="2.600"/><path d="M7 0v8L1 4z" fill="#2c8c28"/><circle cx="9" cy="9.500" r="1.800" fill="#247"/></symbol>
<symbol id="i-quad" viewBox="0 0 18 18"><path d="M1.500 1.500h15v15h-15zM9 1v16M1 9h16" fill="none" stroke="#404868" stroke-width="1.600"/></symbol>
</defs>
</svg>

<div class="app">
<header class="titlebar">
  <div class="quick">
    <span class="logo"><svg><use href="#i-v"/></svg></span>
    <button aria-label="New"><svg><use href="#i-new"/></svg></button>
    <button aria-label="Open"><svg><use href="#i-open"/></svg></button>
    <button aria-label="Open copy"><svg><use href="#i-openc"/></svg></button>
    <button aria-label="Save"><svg><use href="#i-save"/></svg></button>
    <button aria-label="Save all"><svg><use href="#i-savea"/></svg></button>
    <button aria-label="Export"><svg><use href="#i-savex"/></svg></button>
    <button aria-label="Print"><svg><use href="#i-print"/></svg></button>
    <button aria-label="Preview"><svg><use href="#i-prev"/></svg></button>
    <button aria-label="Undo"><svg><use href="#i-undo"/></svg></button>
    <button aria-label="Redo"><svg><use href="#i-redo"/></svg></button>
    <button aria-label="History"><svg><use href="#i-hour"/></svg></button>
    <i class="drop"></i><i class="bar"></i>
  </div>
  <h1>VISI 2017 R1 &nbsp; from Vero Software x64 - Unnamed - [Dynamic]</h1>
  <div class="winctl">
    <button class="wmin" aria-label="Minimise"><svg viewBox="0 0 14 12"><rect x="2" y="6" width="10" height="3" fill="#fff" stroke="#444"/></svg></button>
    <button class="wmax" aria-label="Restore"><svg viewBox="0 0 14 12"><path d="M5 1h7v7H5zM3 3h7v7H3z" fill="#fff" stroke="#444"/><path d="M5.500 5.500h2v2h-2z" fill="#444"/></svg></button>
    <button class="wclose" aria-label="Close"><svg viewBox="0 0 14 12"><path d="M3 2l8 8M11 2l-8 8" stroke="#644" stroke-width="4"/><path d="M3 2l8 8M11 2l-8 8" stroke="#fff" stroke-width="2.400"/></svg></button>
  </div>
</header>
<nav class="menu">
  <button>File</button><button>Edit</button><button>Wireframe</button><button>Solid</button><button>Mesh</button><button>Operation</button><button>Modelling</button><button>Analysis</button><button>Electrode</button><button>Annotation</button><button>Plotview</button><button>System</button><button>Window</button><button>Machining</button><button>Mould</button><button>Progress</button><button>Standard Elements</button><button>Flow</button><button>?</button>
  <svg class="docctl" viewBox="0 0 42 12"><path d="M1 9.500h8" stroke="#888" stroke-width="2"/><path d="M20 2h6v6h-6zM18 4h6v6h-6z" fill="#d4dae8" stroke="#888"/><path d="M35 3l6 6M41 3l-6 6" stroke="#777" stroke-width="2"/></svg>
</nav>
<section class="ribbon">
  <div class="tabs">
    <button class="tdrop" aria-label="More tabs"><i class="drop"></i></button><button class="cur">Standard</button><button>Edit</button><button>Wireframe</button><button>Modelling</button><button>Surfaces</button><button>Dimensions</button><button>Applications</button><button>Mould</button><button>Progress</button><button>CAM</button><button>Flow</button>
  </div>
  <div class="groups">
    <div class="group g1"><div class="tools">
      <button aria-label="Attributes"><svg><use href="#i-brush"/></svg></button><button aria-label="View styles"><svg><use href="#i-eyedoc"/></svg></button><button aria-label="Show pick"><svg><use href="#i-eyeh"/></svg></button><button aria-label="Hide pick"><svg><use href="#i-eyem"/></svg></button><button aria-label="Filter"><svg><use href="#i-eyet"/></svg></button><button aria-label="Swap"><svg><use href="#i-eyer"/></svg></button><button aria-label="Toggle visibility"><svg><use href="#i-eyepm"/></svg></button><button aria-label="Show"><svg><use href="#i-eyep"/></svg></button><button aria-label="Hide"><svg><use href="#i-eyen"/></svg></button>
    </div><p>Attributes/Visibility</p></div>
    <div class="group g2"><div class="tools">
      <button aria-label="Refresh"><svg><use href="#i-cycle"/></svg></button><button aria-label="Wireframe"><svg><use href="#i-cyl"/></svg></button><button aria-label="Hidden"><svg><use href="#i-cyl2"/></svg></button><button aria-label="Dashed"><svg><use href="#i-cyl"/></svg></button><button aria-label="Shaded sky"><svg><use href="#i-cyls"/></svg></button><button class="on" aria-label="Shaded"><svg><use href="#i-cylb"/></svg></button><button aria-label="Transparent"><svg><use href="#i-cylc"/></svg></button><button aria-label="Flat"><svg><use href="#i-cylp"/></svg></button><button aria-label="Mesh"><svg><use href="#i-cylw"/></svg></button><button aria-label="Update shading"><svg><use href="#i-cylcy"/></svg></button><button aria-label="Settings"><svg><use href="#i-tools"/></svg></button>
    </div><p>Graphics</p></div>
    <div class="group g3"><div class="tools">
      <button aria-label="Show bodies"><svg><use href="#i-bxh"/></svg></button><button aria-label="Filter bodies"><svg><use href="#i-bxt"/></svg></button><button aria-label="Swap bodies"><svg><use href="#i-bxr"/></svg></button><button aria-label="Toggle bodies"><svg><use href="#i-bxp"/></svg></button><button aria-label="Solid"><svg><use href="#i-cylb"/></svg></button><button aria-label="Striped"><svg><use href="#i-cylstr"/></svg></button><button aria-label="Accept"><svg><use href="#i-cylok"/></svg></button><button aria-label="Grey"><svg><use href="#i-grey"/></svg></button><button aria-label="Blue mesh"><svg><use href="#i-cylbw"/></svg></button><button aria-label="Render"><svg><use href="#i-gem"/></svg></button>
    </div><p>Graphics (advanced)</p></div>
    <div class="group g4"><div class="tools">
      <button aria-label="Zoom"><svg><use href="#i-zoompm"/></svg></button><button aria-label="Zoom window"><svg><use href="#i-zoomc"/></svg></button><button aria-label="One to one"><svg><use href="#i-one"/></svg></button><button aria-label="View along"><svg><use href="#i-varrow"/></svg></button><button aria-label="Rotate"><svg><use href="#i-rot"/></svg></button><button aria-label="View manager"><svg><use href="#i-smile"/></svg></button>
    </div><p>Views</p></div>
    <div class="group g5"><div class="tools">
      <button aria-label="Workplane"><svg><use href="#i-axes"/></svg></button><button aria-label="Set plane"><svg><use href="#i-axes2"/></svg></button><button aria-label="Swap plane"><svg><use href="#i-axes3"/></svg></button>
    </div><p>Workplanes</p></div>
    <div class="group g6"><div class="tools">
      <button aria-label="Colours"><svg><use href="#i-pal"/></svg></button><button aria-label="Styles"><svg><use href="#i-sheet"/></svg></button><button aria-label="Options"><svg><use href="#i-gear"/></svg></button><button aria-label="Grid"><svg><use href="#i-hand"/></svg></button><button aria-label="Layers"><svg><use href="#i-dia"/></svg></button>
    </div><p>System</p></div>
  </div>
</section>

<main class="work">
  <aside class="left">
    <div class="palettes">
    <div class="palette pa">
      <button aria-label="Zoom"><svg><use href="#i-lens"/></svg></button><button class="on m" aria-label="Trim"><svg><use href="#i-pc1"/></svg></button>
      <button aria-label="Fit"><svg><use href="#i-fit"/></svg></button><button class="m" aria-label="Draw curve"><svg><use href="#i-pc2"/></svg></button>
      <button class="m" aria-label="Zoom modes"><svg><use href="#i-zoompm"/></svg></button><button class="m" aria-label="Validate"><svg><use href="#i-chk"/></svg></button>
      <button class="m" aria-label="Axes"><svg><use href="#i-axes"/></svg></button><button class="m" aria-label="Spline"><svg><use href="#i-pc3"/></svg></button>
      <button class="m" aria-label="Attributes"><svg><use href="#i-brush"/></svg></button><button class="m" aria-label="Surface"><svg><use href="#i-win"/></svg></button>
      <button class="m" aria-label="Refresh"><svg><use href="#i-cycle"/></svg></button><button class="m" aria-label="Solid"><svg><use href="#i-cube"/></svg></button>
      <button class="m" aria-label="Query"><svg><use href="#i-q"/></svg></button><button class="m" aria-label="Dimension"><svg><use href="#i-dim"/></svg></button>
      <button class="m" aria-label="Delete"><svg><use href="#i-bin"/></svg></button><button class="m" aria-label="Undo"><svg><use href="#i-undo"/></svg></button>
      <button class="m" aria-label="Navigate"><svg><use href="#i-wheel"/></svg></button><button class="m" aria-label="Import"><svg><use href="#i-house"/></svg></button>
    </div>
    <div class="palette pb">
      <button class="on" aria-label="End points"><svg><use href="#i-seg"/></svg></button><button aria-label="Along"><svg><use href="#i-lseg"/></svg></button>
      <button class="on" aria-label="Parallel"><svg><use href="#i-par"/></svg></button><button aria-label="Perpendicular"><svg><use href="#i-perp"/></svg></button>
      <button aria-label="Tangent"><svg><use href="#i-tan"/></svg></button><button aria-label="Angle"><svg><use href="#i-ang"/></svg></button>
      <button aria-label="Grid points"><svg><use href="#i-dots"/></svg></button><i></i>
      <i></i><i></i>
      <button class="on" aria-label="Element point"><svg><use href="#i-ep"/></svg></button><i></i>
      <button aria-label="Element"><svg><use href="#i-e"/></svg></button><button aria-label="Point"><svg><use href="#i-p"/></svg></button>
      <i></i><i></i>
      <i></i><button class="on" aria-label="Library"><svg><use href="#i-books"/></svg></button>
      <button class="on" aria-label="Segments"><svg><use href="#i-seg"/></svg></button><button class="on" aria-label="Lines"><svg><use href="#i-lseg"/></svg></button>
      <button class="on" aria-label="Circles"><svg><use href="#i-circ"/></svg></button><button class="on" aria-label="Arcs"><svg><use href="#i-arc"/></svg></button>
      <button aria-label="Points"><svg><use href="#i-pt"/></svg></button><button class="on" aria-label="Curves"><svg><use href="#i-wave"/></svg></button>
      <button class="on" aria-label="Profiles"><svg><use href="#i-prof"/></svg></button><button aria-label="Polylines"><svg><use href="#i-zig"/></svg></button>
      <button class="on" aria-label="Hatches"><svg><use href="#i-hat"/></svg></button><button class="abc" aria-label="Text"><span>B</span><span>A C</span></button>
      <button aria-label="Dimensions"><svg><use href="#i-gdim"/></svg></button><button aria-label="Clouds"><svg><use href="#i-gdots"/></svg></button>
      <button class="on" aria-label="Sections"><svg><use href="#i-hat2"/></svg></button><button aria-label="Meshes"><svg><use href="#i-mesh"/></svg></button>
      <button class="on" aria-label="Surfaces"><svg><use href="#i-win"/></svg></button><button class="on" aria-label="Solids"><svg><use href="#i-cube"/></svg></button>
      <button aria-label="Wire bodies"><svg><use href="#i-gcube"/></svg></button><button class="on" aria-label="Assemblies"><svg><use href="#i-cubes"/></svg></button>
      <button aria-label="Planes"><svg><use href="#i-gaxes"/></svg></button><button aria-label="Tool paths"><svg><use href="#i-coil"/></svg></button>
    </div>
    </div>
  </aside>

  <section class="canvas">
    <div class="vtop">
      <div class="vbar">
        <button aria-label="Menu"><svg><use href="#i-menu"/></svg></button><button aria-label="Fit"><svg><use href="#i-fit"/></svg></button><button aria-label="Zoom"><svg><use href="#i-lens"/></svg></button><button aria-label="Axes"><svg><use href="#i-axes"/></svg></button><button aria-label="Top"><svg><use href="#i-w1"/></svg></button><button aria-label="Bottom"><svg><use href="#i-w2"/></svg></button><button aria-label="Left"><svg><use href="#i-w3"/></svg></button><button aria-label="Right"><svg><use href="#i-w4"/></svg></button><button aria-label="Front"><svg><use href="#i-w3"/></svg></button><button aria-label="Back"><svg><use href="#i-w5"/></svg></button><button aria-label="Isometric"><svg><use href="#i-w6"/></svg></button>
      </div>
      <div class="rounds">
        <button class="rw" aria-label="Confirm"><svg viewBox="0 0 60 60"><path d="M18 31l8 8 17-17"/></svg></button>
        <button class="rr" aria-label="Cancel"><svg viewBox="0 0 60 60"><path d="M21 21l18 18M39 21L21 39"/></svg></button>
        <button class="rg" aria-label="Back"><svg viewBox="0 0 60 60"><path d="M36 17L23 30l13 13"/></svg></button>
        <button class="rw" aria-label="Next"><svg viewBox="0 0 60 60"><path d="M25 17l13 13-13 13"/></svg></button>
      </div>
    </div>
    <div class="vside">
      <button aria-label="Wireframe"><svg><use href="#i-cyl"/></svg></button><button aria-label="Hidden"><svg><use href="#i-cyl2"/></svg></button><button class="von" aria-label="Shaded"><svg><use href="#i-cylb"/></svg></button><button aria-label="Flat"><svg><use href="#i-cylp"/></svg></button><button aria-label="Mesh"><svg><use href="#i-cylw"/></svg></button>
    </div>
    <svg class="drawing" viewBox="115 101 735 556" aria-hidden="true">
      <defs><marker id="ah" viewBox="0 0 16 10" refX="15" refY="5" markerWidth="16" markerHeight="10" markerUnits="userSpaceOnUse" orient="auto-start-reverse"><path d="M1 1.500L15 5 1 8.500M5 5h10" fill="none" stroke="#8a8118" stroke-width="1.600"/></marker></defs>
      <g fill="none" stroke="#817a1c" stroke-width="1.700">
        <path d="M316 327L590 241" marker-start="url(#ah)" marker-end="url(#ah)"/>
        <path d="M383 380L590 260" marker-start="url(#ah)" marker-end="url(#ah)"/>
        <path d="M322 345L383 380" marker-start="url(#ah)" marker-end="url(#ah)"/>
        <path d="M316 327q1 10 6 18"/>
        <path d="M413 317Q440 353 395 388" marker-start="url(#ah)" marker-end="url(#ah)"/>
      </g>
      <path d="M482 378V320" stroke="#167c88" stroke-width="3"/>
      <path d="M482 378l30-16" stroke="#14763a" stroke-width="2.500"/><circle cx="510" cy="363" r="3.500" fill="#14843a"/>
      <path d="M482 379l18 9" stroke="#a81c28" stroke-width="3"/><path d="M498 385l8 7-10-1z" fill="#c81c28" stroke="#c81c28"/>
      <circle cx="482" cy="379" r="2.600" fill="#68727c"/>
      <circle cx="591" cy="258" r="18.500" fill="#7a7520"/>
      <path d="M322 345L590 260" stroke="#ecec42" stroke-width="2" stroke-dasharray="8 7"/>
      <path d="M576 242l14-1-2 6M578 266l12-6-8 10" fill="none" stroke="#b9a814" stroke-width="1.800"/>
      <path d="M591 246v24M579 257.500h24" stroke="#f4f4ea" stroke-width="1.600"/>
      <path d="M170 602v-50" stroke="#12a3ad" stroke-width="1.800"/><path d="M166.500 552l3.500-8 3.500 8z" fill="#28c8cc" stroke="#28c8cc"/>
      <path d="M172 601l17-9 15 9-16 9z" fill="#7c853c"/>
      <path d="M188 610l16-9-16-9" fill="none" stroke="#f0ee3c" stroke-width="1.500"/>
      <path d="M172 582l16-9v37M172 582l16 10" fill="none" stroke="#ced4dc" stroke-width="1.500"/>
      <path d="M170 602l24-13" stroke="#179c25" stroke-width="2.500"/><path d="M194 585l10-3-6 8z" fill="#12ae20"/>
      <path d="M170 602l18 9" stroke="#c4141c" stroke-width="3"/><path d="M188 607l6 8-12-1z" fill="#e01420"/>
      <circle cx="170" cy="602" r="2.800" fill="#7c8692"/>
      <g class="axl"><text x="166" y="542">Z</text><text x="192" y="621">X</text><text x="202" y="585" class="yl">Y</text><text x="504" y="399">X</text><text x="514" y="362" class="yl">Y</text></g>
    </svg>
    <input class="dimv d1" aria-label="Segment length" value="112">
    <input class="dimv d2" aria-label="Offset in Y" value="107.661">
    <input class="dimv d3" aria-label="Angle" value="74">
    <div class="dimv d4"><input aria-label="Offset in X" value="30.871"></div>
  </section>

  <aside class="right">
    <div class="dock">
      <div class="docktitle"><h2>Drawing styles manager</h2><svg viewBox="0 0 28 12"><path d="M4 1h4v5H4zM2 6.500h8M6 7v4" fill="none" stroke="#c8d0dc"/><path d="M20 3l6 6M26 3l-6 6" stroke="#dde2ea" stroke-width="1.800"/></svg></div>
      <div class="dockbody">
        <div class="content">
          <div class="field"><label for="etype">Element types</label><select id="etype"><option>GEOMETRY</option></select></div>
          <div class="tablewrap">
          <table>
            <thead><tr><th>Style</th><th></th></tr></thead>
            <tbody>
              <tr class="sel"><td><span>CONTINUOS</span></td><td></td></tr><tr><td><span>HIDDEN STYLE</span></td><td></td></tr><tr><td><span>HIDDEN STYLE2</span></td><td></td></tr><tr><td><span>AXIS</span></td><td></td></tr><tr><td><span>SCREW STYLE</span></td><td></td></tr><tr><td><span>SMOOTH</span></td><td></td></tr><tr><td></td><td></td></tr><tr><td></td><td></td></tr><tr><td></td><td></td></tr><tr><td></td><td></td></tr>
            </tbody>
          </table>
          </div>
          <div class="split"></div>
          <div class="lower">
            <div class="lcontent">
              <div class="btns"><button>New</button><button>Delete</button><button>Restore defaults</button><button>Save configuration</button></div>
              <div class="swatches">
                <button style="background:#00ffff"></button><button class="pick" style="background:#ffff00"></button><button style="background:#008000"></button><button style="background:#800000"></button><button style="background:#c0c0c0"></button><button style="background:#808080"></button><button style="background:#808000"></button><button style="background:#ffffff"></button><button style="background:#008080"></button><button style="background:#ff8000"></button><button style="background:#00ff40"></button><button style="background:#ff00ff"></button>
                <button style="background:#00c0c0"></button><button style="background:#c0c000"></button><button style="background:#c0ffc0"></button><button style="background:#ff8080"></button><button style="background:#d4d4ec"></button><button style="background:#909080"></button><button style="background:#808040"></button><button style="background:#400080"></button><button style="background:#308830"></button><button style="background:#ff8080"></button><button style="background:#6cff6c"></button><button style="background:#ff0080"></button>
                <button style="background:#008080"></button><button style="background:#ffff40"></button><button style="background:#40ff40"></button><button style="background:#c00000"></button><button style="background:#b4b4dc"></button><button style="background:#c0a4a4"></button><button style="background:#10d468"></button><button style="background:#8000ff"></button><button style="background:#40a840"></button><button style="background:#f49000"></button><button style="background:#78ff78"></button><button style="background:#fc8cfc"></button>
                <button style="background:#0080c0"></button><button style="background:#ffffc0"></button><button style="background:#008000"></button><button style="background:#600000"></button><button style="background:#9090ac"></button><button style="background:#94a094"></button><button style="background:#a4d808"></button><button style="background:#004080"></button><button style="background:#80cc80"></button><button style="background:#ffb450"></button><button style="background:#c0ffc0"></button><button style="background:#ffc0ff"></button>
              </div>
              <div class="lines">
                <button aria-label="Continuous"><svg viewBox="0 0 40 18"><path d="M0 9.500h40"/></svg></button><button class="pick" aria-label="Dashed"><svg viewBox="0 0 40 18"><path d="M0 9.500h18M23 9.500h17"/></svg></button><button aria-label="Dotted"><svg viewBox="0 0 40 18"><path d="M0 9.500h40" stroke-dasharray="3 2"/></svg></button><button aria-label="Dash dot"><svg viewBox="0 0 40 18"><path d="M0 9.500h40" stroke-dasharray="9 5 3 5"/></svg></button><button aria-label="Dash dot dot"><svg viewBox="0 0 40 18"><path d="M0 9.500h40" stroke-dasharray="9 2 3 2 3 2"/></svg></button>
              </div>
              <div class="arrows">
                <button class="pick" aria-label="Plain"><svg viewBox="0 0 25 20"><path d="M0 10h25"/></svg></button><button aria-label="Open arrow"><svg viewBox="0 0 25 20"><path d="M4 10h20M15 6L4 10l11 4"/></svg></button><button aria-label="Closed arrow"><svg viewBox="0 0 25 20"><path d="M1 10h3M16 10h8M16 6L4 10l12 4z"/></svg></button><button aria-label="Double open"><svg viewBox="0 0 25 20"><path d="M2 10h22M13 6L2 10l11 4M18 6L8 10l10 4"/></svg></button><button aria-label="Double closed"><svg viewBox="0 0 25 20"><path d="M12 6L3 10l9 4zM20 6l-8 4 8 4zM20 10h4"/></svg></button><button aria-label="Square"><svg viewBox="0 0 25 20"><path d="M7 6h8v8H7zM15 10h9"/></svg></button><button aria-label="Circle"><svg viewBox="0 0 25 20"><circle cx="11" cy="10" r="4"/><path d="M15 10h9"/></svg></button><button aria-label="Slash"><svg viewBox="0 0 25 20"><path d="M7 5l7 9M14 10h10"/></svg></button><button aria-label="Cross"><svg viewBox="0 0 25 20"><path d="M7 6l8 8M15 6l-8 8M11 10h13"/></svg></button><button aria-label="Bars"><svg viewBox="0 0 25 20"><path d="M1 6h11M1 8h11M1 10h23M1 12h11M1 14h11"/></svg></button><button aria-label="Reverse arrow"><svg viewBox="0 0 25 20"><path d="M1 10h11M22 5l-10 5 10 5z"/></svg></button>
              </div>
            </div>
            <div class="scroll"><i class="up"></i><b></b><i class="down"></i></div>
          </div>
        </div>
        <div class="scroll outer"><i class="up"></i><b></b><i class="down"></i></div>
      </div>
    </div>
    <div class="sidetabs">
      <button aria-label="View styles"><svg><use href="#i-eyedoc"/></svg></button>
      <button class="on" aria-label="Styles"><svg><use href="#i-sheet"/></svg></button>
      <span>Drawing styles manager</span>
    </div>
  </aside>
</main>

<footer class="status">
  <div class="row r1">
    <strong class="msg">Offset in X = 30.871, Offset in Y = 107.661, Segment length = 112, Angle relative to X axis = 74</strong>
    <div class="cells">
      <i class="grip"></i>
      <div class="search"><input type="text" aria-label="Search"><svg viewBox="0 0 12 12"><circle cx="7.500" cy="4.500" r="3.500" fill="#dce8f8" stroke="#6078a0"/><path d="M5 7l-4 4" stroke="#6078a0" stroke-width="1.600"/></svg></div>
      <i class="grip"></i><span class="c1">Absolute XY Top</span><span class="c2 sep">View ABS</span><i class="grip"></i><strong class="c3">LAYER0</strong><span class="c4 sep"></span>
      <span class="th sep"><svg class="t1" viewBox="0 0 30 10"><path d="M0 5h17M21 5h6"/></svg></span><span class="th sep"><svg viewBox="0 0 30 10"><path d="M0 5h16M20 5h10"/></svg></span><span class="th sep"><svg class="t3" viewBox="0 0 30 10"><path d="M0 5h30" stroke-dasharray="1 1"/></svg></span>
    </div>
  </div>
  <div class="row r2">
    <span class="msg">Select an element</span>
    <div class="cells">
      <span class="tg sep">Toggle</span>
      <button class="sep" aria-label="Cycle"><svg><use href="#i-redc"/></svg></button><button class="sep" aria-label="Pick"><svg><use href="#i-sel"/></svg></button><button class="sep" aria-label="Properties"><svg><use href="#i-prop"/></svg></button><button class="sep" aria-label="Help"><svg><use href="#i-q"/></svg></button><button class="sep" aria-label="Move"><svg><use href="#i-move"/></svg></button><button class="sep hl" aria-label="Plane"><svg><use href="#i-mag"/></svg></button><button class="sep" aria-label="Layers"><svg><use href="#i-lay"/></svg></button><button class="sep" aria-label="Rotate"><svg><use href="#i-turn"/></svg></button><button class="sep" aria-label="Grid"><svg><use href="#i-quad"/></svg></button>
      <span class="ls sep">LS: 1.00 PS: 1.00</span><span class="un sep">Units: MM</span><span class="co sep"><em>X =-0025.043</em> Y = 0081.438 Z = 0000.000</span>
    </div>
  </div>
</footer>

<footer class="taskbar">
  <button class="orb" aria-label="Start"><svg viewBox="0 0 36 34"><circle cx="18" cy="17" r="16" fill="url(#gOrb)" stroke="#9cc" stroke-width="1"/><path d="M10 10q4-3 7-1l-1 7q-4-2-8 0z" fill="#f0642c"/><path d="M19 9q4 3 8 1l-2 7q-4 2-8-1z" fill="#8cc63f"/><path d="M8 18q4-2 8 0l-2 7q-3-2-7 0z" fill="#3ca4e8"/><path d="M17 18q4 3 8 1l-2 7q-4 2-8-1z" fill="#fcc428"/></svg></button>
  <div class="tasks">
    <button class="open" aria-label="Explorer"><svg><use href="#i-fold"/></svg></button><button aria-label="Outlook"><svg><use href="#i-outl"/></svg></button><button class="open" aria-label="PowerPoint"><svg><use href="#i-ppt"/></svg></button><button aria-label="Report"><svg><use href="#i-rep"/></svg></button><button aria-label="Search"><svg><use href="#i-find"/></svg></button><button aria-label="TeamViewer"><svg><use href="#i-tv"/></svg></button><button aria-label="Peps"><svg><use href="#i-scr"/></svg></button><button class="open act" aria-label="VISI"><svg><use href="#i-v"/></svg></button><button aria-label="VISI viewer"><svg><use href="#i-v"/></svg></button><button aria-label="Word"><svg><use href="#i-word"/></svg></button><button aria-label="Screenpresso"><svg><use href="#i-sp"/></svg></button><button class="open" aria-label="Firefox"><svg><use href="#i-ff"/></svg></button><button class="open" aria-label="Skype"><svg><use href="#i-sky"/></svg></button>
  </div>
  <div class="tray">
    <span>EN</span>
    <svg viewBox="0 0 150 20"><path d="M9 13l4-5 4 5z" fill="#fff"/><path d="M31 4v13" stroke="#fff" stroke-width="1.600"/><path d="M32 4h6v2h7l-2 3 2 3h-7v-2h-6z" fill="#fff"/><path d="M53 8l6-4 4 2 4-2-1 6 1 6-6-1-5 2z" fill="#f4801c"/><circle cx="56" cy="14" r="4" fill="#d8242c"/><path d="M54.500 12.500l3 3M57.500 12.500l-3 3" stroke="#fff"/><path d="M78 6h9v8h-9zM76 3v6h-2V5M81 17h6" fill="none" stroke="#fff" stroke-width="1.500"/><path d="M97 8h3l5-4v12l-5-4h-3z" fill="#fff"/><path d="M107 7q2 3 0 6M110 5q3 5 0 10" fill="none" stroke="#fff" stroke-width="1.300"/><path d="M120 5h7v11h-7zM122 3h3M126 9h4v4h-4zM129 6v3M129 13v3" fill="none" stroke="#fff" stroke-width="1.800"/></svg>
  </div>
</footer>
</div>

<div class="curl">
  <svg viewBox="0 0 120 62" aria-hidden="true"><path d="M120 28v34H3L98 30z" fill="#414345"/><path d="M1 61Q70 40 101 3Q110 0 109 9Q103 20 119 28Q60 36 1 61z" fill="url(#gCurl)"/><ellipse cx="104" cy="8" rx="4" ry="7" fill="#1e4a44" transform="rotate(-25 104 8)"/><g transform="translate(44 43)"><rect width="15" height="14" fill="#dc3c34"/><circle cx="8" cy="6" r="3.500" fill="none" stroke="#fff" stroke-width="1.400"/><path d="M4.500 6v7" stroke="#fff" stroke-width="1.400"/></g></svg>
  <p>Screenpresso<br>.com</p>
</div>
</body>
</html>
```
FILE: styles.css
```css
* { box-sizing: border-box; }
html, body { height: 100%; }
body {
  margin: 0;
  padding-right: 2px;
  overflow: hidden;
  position: relative;
  font: 11px/16px "Open Sans", "Noto Sans", sans-serif;
  color: #1c1c28;
  background: linear-gradient(#000 98px, #d8d81c 98px, #d8d81c 135px, #000 135px, #000 277px, #5c5a18 277px, #5c5a18 325px, #000 325px);
}
button { font: inherit; color: inherit; border: 0; padding: 0; margin: 0; background: none; }
h1, h2, p { margin: 0; font: inherit; }
svg { display: block; }
.defs { position: absolute; width: 0; height: 0; }
.app { display: flex; flex-direction: column; height: 100%; min-height: 600px; background: #d4dae7; }
.drop { display: block; width: 0; height: 0; border: 3px solid transparent; border-top: 4px solid #111; border-bottom: 0; }
.on { background: #ffe47c; box-shadow: inset 0 0 0 1px #e6c86c; }

/* Title bar */
.titlebar { display: grid; grid-template-columns: 3fr auto 2fr; align-items: center; height: 22px; border-top: 1px solid #000; border-bottom: 1px solid #8ba3bb; background: linear-gradient(90deg, #c6d8ea, #b4d3f0 30%, #a9cff2 50%, #b6d8f4 80%, #c2dcf2); }
.quick { display: flex; align-items: center; }
.quick button { width: 24px; display: flex; justify-content: center; }
.quick svg { width: 18px; height: 18px; }
.quick .logo { width: 24px; }
.quick .drop { margin: 0 11px 0 2px; }
.bar { width: 1px; height: 14px; background: #8fa4ba; }
.winctl { display: flex; align-self: start; justify-self: end; margin-right: 4px; }
.winctl button { width: 26px; height: 16px; display: flex; justify-content: center; align-items: center; border: 1px solid #5a6a7c; border-top: 0; background: linear-gradient(#dfe9f3 45%, #a9bccf 50%, #c8dbea); }
.winctl svg { width: 14px; height: 12px; }
.winctl .wmin { border-radius: 0 0 0 4px; }
.winctl .wclose { width: 44px; border-radius: 0 0 4px 0; background: linear-gradient(#e2a090 45%, #c03a22 50%, #d86a48); }

/* Menu and ribbon */
.menu { display: flex; align-items: center; gap: 12px; height: 18px; padding: 0 6px; }
.docctl { width: 42px; height: 12px; margin-left: auto; }
.ribbon { border-left: 8px solid #4d6082; padding-left: 4px; height: 61px; }
.tabs { display: flex; height: 20px; }
.tabs button { padding: 0 4px 0 3px; border: 1px solid #8c98aa; border-left: 0; border-bottom: 0; background: #e9f2fa; white-space: nowrap; }
.tabs .tdrop { padding: 0 5px; }
.tabs .cur { background: #b2d5f7; font-weight: bold; }
.groups { display: flex; height: 41px; }
.group { border-left: 2px dotted #f8faff; padding: 3px 9px 0 7px; flex: none; }
.g1 { width: 235px; padding-right: 11px; }
.g2 { width: 284px; padding-right: 11px; }
.g3 { width: 258px; }
.g4 { width: 162px; }
.g5 { width: 89px; }
.g6 { width: 137px; }
.tools { display: flex; justify-content: space-between; }
.tools button { width: 22px; height: 22px; padding: 2px; }
.tools svg { width: 18px; height: 18px; }
.group p { text-align: center; color: #74787e; line-height: 15px; }

/* Work area */
.work { flex: 1; min-height: 0; display: grid; grid-template-columns: 115px minmax(0, 1fr) 428px; }
.left { border-top: 8px solid #4d6082; border-right: 1px solid #8090ac; display: flex; }
.palettes { flex: 1; display: flex; justify-content: space-between; padding: 8px 4px 72px 5px; border-top: 3px dotted #f4f7fc; }
.palette { display: grid; grid-template-columns: 22px 22px; column-gap: 3px; grid-template-rows: repeat(19, 1fr); align-items: center; }
.palette button { position: relative; width: 22px; height: 22px; padding: 2px; }
.palette svg { width: 18px; height: 18px; }
.palette .m::after { content: ""; position: absolute; right: 1px; top: 1px; border: 3px solid transparent; border-top: 3px solid #111; border-bottom: 0; }
.palette .abc { display: grid; padding: 2px 0; font: bold 9px/9px "Liberation Sans", sans-serif; color: #969696; }

.canvas { position: relative; overflow: hidden; background: linear-gradient(#000016, #020722 12%, #1c2947 45%, #2a3d63 65%, #476590); }
.vtop { display: flex; position: relative; gap: 5px; height: 30px; padding: 3px 0 0 3px; }
.vbar { display: flex; gap: 3px; }
.vbar button, .vside button { width: 23px; height: 23px; padding: 2px; border: 1px solid #7c8090; background: #747888; }
.vbar svg, .vside svg { width: 17px; height: 17px; }
.vside { position: relative; display: flex; flex-direction: column; align-items: flex-start; gap: 3px; padding-left: 3px; }
.vside .von { background: #a48c48; border-color: #d8bc58; }
.rounds { display: flex; gap: 9px; padding-top: 2px; }
.rounds button { width: 60px; height: 60px; border: 4px solid; border-radius: 50%; }
.rounds svg { width: 60px; height: 60px; margin: -4px; fill: none; stroke: currentColor; stroke-width: 4; stroke-linecap: round; }
.rounds .rw { color: #bdbec2; }
.rounds .rr { color: #b3131b; }
.rounds .rg { color: #0c6c1e; }
.drawing { position: absolute; left: 0; top: 0; width: 735px; height: 556px; }
.axl { font: 12px "Liberation Sans", sans-serif; fill: #c4cad4; }
.axl .yl { fill: #b81c30; }
.dimv { position: absolute; height: 21px; padding: 0 1px; border: 2px solid #77701c; background: #fff; color: #40404c; font: 10px/15px "Noto Sans", sans-serif; }
.d1 { left: 325px; top: 174px; width: 24px; }
.d2 { left: 351px; top: 209px; width: 43px; }
.d3 { left: 300px; top: 243px; width: 18px; }
.d4 { left: 217px; top: 252px; width: 38px; padding: 2px 1px; }
.d4 input { display: block; width: 100%; height: 13px; padding: 0; border: 0; background: #3390ef; color: #e4f0ff; font: inherit; line-height: 13px; }

/* Style manager */
.right { display: flex; background: #d4dae7; min-width: 0; }
.dock { flex: 1; min-width: 0; display: flex; flex-direction: column; border-left: 1px solid #8fa0ba; padding-left: 6px; background: radial-gradient(#9aa6ba 1px, transparent 1px) 0 0 / 3px 3px; }
.docktitle { display: flex; align-items: center; justify-content: space-between; height: 20px; padding: 0 4px 0 2px; background: #4d6082; color: #fff; }
.docktitle svg { width: 28px; height: 12px; }
.dockbody { flex: 1; display: flex; min-height: 0; background: #d4dae7; }
.content { flex: 1; min-width: 0; display: flex; flex-direction: column; padding: 13px 3px 0 4px; }
.field { display: flex; align-items: center; padding-left: 7px; }
.field label { width: 85px; font-weight: bold; }
.field select { appearance: none; width: 203px; height: 21px; padding: 0 3px; border: 1px solid #707070; border-radius: 2px; font: inherit; color: inherit; background: linear-gradient(to bottom left, #111 50%, transparent 50%) right 7px top 9px / 4px 4px no-repeat, linear-gradient(to bottom right, #111 50%, transparent 50%) right 3px top 9px / 4px 4px no-repeat, linear-gradient(#f2f2f2, #d0d2d6); }
.tablewrap { margin-top: 18px; height: 206px; overflow: hidden; border: 1px solid #7d8794; background: #fdfefc; padding: 1px; flex: none; }
table { width: 100%; border-collapse: collapse; table-layout: fixed; }
th { height: 22px; padding: 0 6px; text-align: left; font-weight: normal; background: linear-gradient(#fff 45%, #f1f3f6 50%); border-bottom: 1px solid #dde0e4; }
th:first-child, td:first-child { width: 318px; border-right: 1px solid #eceeee; }
td { height: 18px; padding: 0 0 0 18px; border-bottom: 1px solid #eef0ee; line-height: 16px; }
td span { display: block; padding-left: 2px; }
.sel td:first-child { background: radial-gradient(circle at 12px 50%, #3ea874 3px, transparent 4px); }
.sel span { background: #ececea; }
.split { height: 7px; margin-top: 2px; flex: none; background: radial-gradient(#a4afc0 1px, transparent 1px) 0 0 / 3px 3px; }
.lower { flex: 1; min-height: 0; display: flex; }
.lcontent { flex: 1; min-width: 0; overflow: hidden; padding: 10px 0 0 8px; }
.btns { display: flex; gap: 5px; padding-bottom: 10px; border-bottom: 1px solid #a4acb8; }
.btns button { height: 20px; padding: 0 3px; border: 1px solid #777; border-radius: 2px; background: linear-gradient(#f2f2f2, #dcdcdc); white-space: nowrap; }
.swatches { display: grid; grid-template-columns: repeat(12, 18px); justify-content: space-between; width: 286px; row-gap: 14px; padding-top: 20px; }
.swatches button { height: 18px; border: 1px solid #fff; border-top-color: #8c8c8c; border-left-color: #8c8c8c; }
.swatches .pick { border: 2px solid #8c1c1c; }
.lines { display: flex; gap: 7px; padding-top: 24px; }
.lines button, .arrows button { flex: none; width: 41px; height: 19px; background: #46648c; border: 1px solid #fff; border-top-color: #8c8c8c; border-left-color: #8c8c8c; }
.lines svg { width: 39px; height: 17px; }
.lines svg, .arrows svg, .th svg { fill: none; stroke: #d4dc30; stroke-width: 1.3; }
.lines svg { stroke-width: 1.8; }
.arrows { display: flex; gap: 7px; padding-top: 24px; }
.arrows button { width: 26px; height: 21px; }
.arrows svg { width: 24px; height: 19px; }
.lines .pick, .arrows .pick { border: 2px solid #901c24; }
.lines .pick svg { width: 37px; height: 15px; }
.arrows .pick svg { width: 22px; height: 17px; }
.scroll { flex: none; width: 15px; display: flex; flex-direction: column; align-items: center; background: #eceef0; padding: 7px 0 6px; }
.scroll b { width: 13px; height: 14px; margin-top: 8px; border: 1px solid #8e949c; background: linear-gradient(90deg, #fafafa, #c8cacc); }
.scroll i { border: 3px solid transparent; width: 0; height: 0; }
.scroll .up { border-bottom-color: #333; border-top: 0; }
.scroll .down { border-top-color: #333; border-bottom: 0; margin-top: auto; }
.sidetabs { width: 23px; display: flex; flex-direction: column; align-items: center; padding-top: 2px; gap: 2px; }
.sidetabs button { width: 22px; height: 22px; padding: 2px; }
.sidetabs svg { width: 18px; height: 18px; }
.sidetabs span { writing-mode: vertical-rl; transform: rotate(180deg); margin-top: 4px; }

/* Status rows */
.status .row { display: flex; justify-content: space-between; padding-left: 6px; white-space: nowrap; overflow: hidden; height: 17px; line-height: 17px; }
.status .r1 { border-bottom: 1px solid #b0b6c0; }
.status .r2 { height: 18px; line-height: 18px; }
.cells { display: flex; flex: none; align-items: stretch; }
.sep { border-left: 1px solid #a8aeb8; }
.grip { width: 6px; background: radial-gradient(#98a4b8 1px, transparent 1px) 0 0 / 3px 3px; }
.r1 .cells { width: 527px; }
.search { display: flex; align-items: center; width: 115px; background: #fff; padding-right: 2px; }
.search input { flex: 1; min-width: 0; height: 15px; border: 0; padding: 0 2px; font: inherit; }
.search svg { width: 12px; height: 12px; }
.r1 .c1 { width: 96px; padding-left: 5px; }
.r1 .c2 { width: 61px; padding-left: 8px; }
.r1 .c3 { width: 56px; padding-left: 6px; }
.r1 .c4 { width: 29px; }
.th { width: 40px; padding: 3px 5px; }
.th svg { width: 30px; height: 10px; background: #46648c; }
.th .t1 { border: 1px solid #2430b8; }
.th .t3 { background: #3c6c80; stroke: #2c5468; }
.r2 .cells { width: 720px; }
.tg { width: 58px; padding-left: 8px; }
.r2 button { width: 29px; padding: 0 0 0 6px; }
.r2 svg { width: 16px; height: 16px; }
.hl svg { background: #ffe47c; }
.ls { width: 105px; padding-left: 8px; }
.un { width: 76px; padding-left: 9px; }
.co { padding-left: 8px; }
.co em { font-style: normal; color: #e81c34; }

/* Taskbar */
.taskbar { display: flex; height: 29px; flex: none; border-top: 1px solid #8c949c; border-bottom: 2px solid #000; background: linear-gradient(90deg, #14201e, #262c28 12%, #3c403a 26%, #62655f 48%, #4c4f4b 60%, #222624 75%, #101414); }
.orb { width: 40px; margin: -4px 11px 0 5px; position: relative; flex: none; }
.orb svg { width: 36px; height: 34px; margin-left: 2px; }
.tasks { display: flex; gap: 4px; flex: 1; }
.tasks button { width: 39px; display: grid; place-items: center; border: 1px solid transparent; border-radius: 3px; }
.tasks svg { width: 16px; height: 16px; }
.tasks .open { border-color: #8c928e; background: linear-gradient(135deg, #777c78, #444a46); }
.tasks .act { background: linear-gradient(135deg, #e0e4e0, #8c908c); }
.tray { display: flex; align-items: center; gap: 5px; margin-right: 68px; color: #fff; }
.tray svg { width: 150px; height: 20px; }
.curl { position: absolute; right: 0; bottom: 1px; width: 121px; }
.curl svg { width: 120px; height: 62px; }
.curl p { position: absolute; right: 2px; bottom: 6px; color: #fff; font: 9px/8px "Liberation Sans", sans-serif; text-align: right; }
```
